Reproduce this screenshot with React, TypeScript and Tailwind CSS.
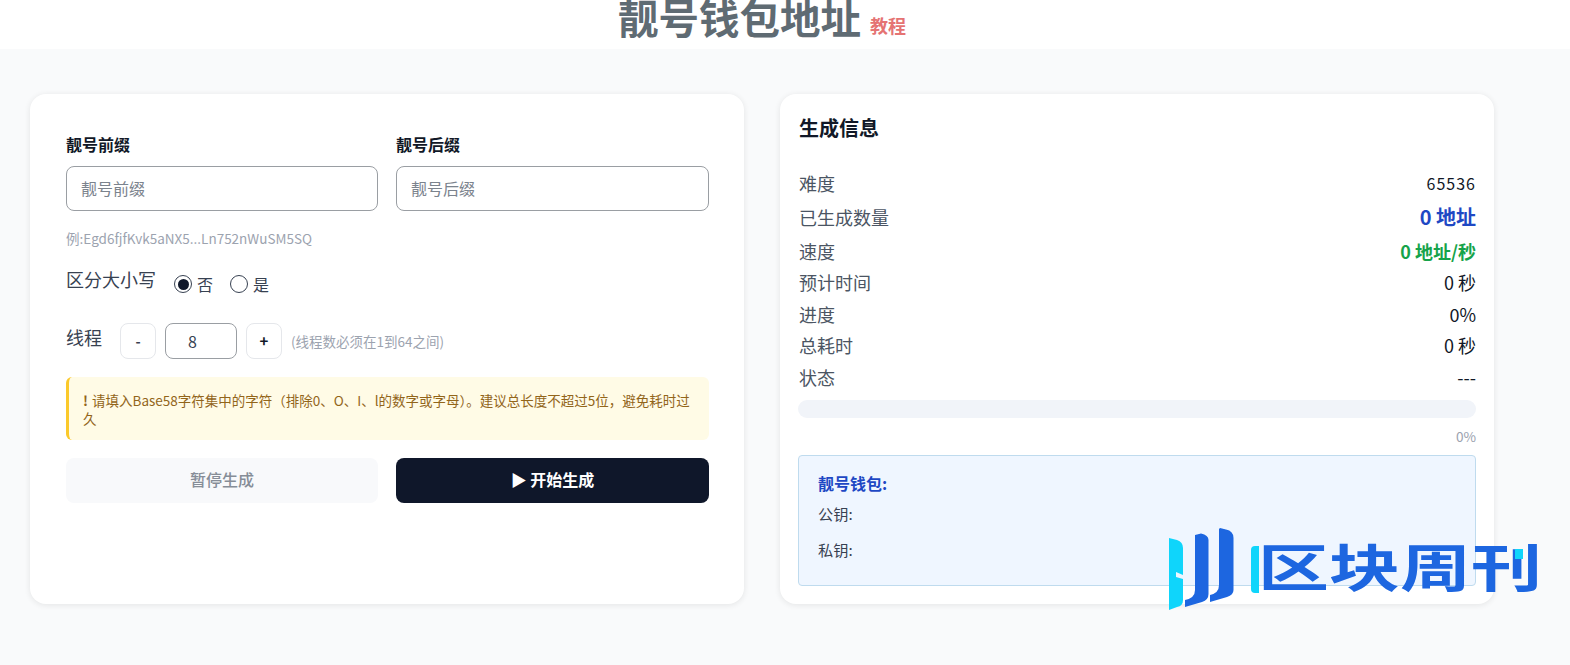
const font = '[font-family:"Noto_Sans_CJK_SC","Noto_Sans",sans-serif]';

const stats = [
  { label: '难度', value: '65536', cls: 'text-[16px] text-[#111827] tracking-[1px]', row: 'h-[32px]' },
  { label: '已生成数量', value: '0 地址', cls: 'text-[20px] font-bold text-[#1e48c4]', row: 'h-[36px]' },
  { label: '速度', value: '0 地址/秒', cls: 'text-[18px] font-bold text-[#16a34a]', row: 'h-[32px]' },
  { label: '预计时间', value: '0 秒', cls: 'text-[18px] text-[#111827]', row: 'h-[31px]' },
  { label: '进度', value: '0%', cls: 'text-[18px] text-[#111827]', row: 'h-[32px]' },
  { label: '总耗时', value: '0 秒', cls: 'text-[18px] text-[#111827]', row: 'h-[31px]' },
  { label: '状态', value: '---', cls: 'text-[18px] text-[#111827]', row: 'h-[32px]' },
];

function LogoMark() {
  return (
    <svg width="68" height="82" viewBox="0 0 68 82" className="shrink-0">
      <path d="M1 10 L9 12 Q15 14 15 20 L15 47 L8 44 L8 49 L15 51 L15 72 Q15 78 9 79 L1 82 Z" fill="#0fd5fb" />
      <path d="M27 7 L33 5.5 Q40.5 7 40.5 12 L40.5 66 Q40.5 72 34 74 L17 79 L17 72 Q27 70 27 62 Z" fill="#1d66e0" />
      <path d="M51 1 L52 0 L58 1.5 Q65.5 3 65.5 10 L65.5 62 Q65.5 67 59 69 L42 74 L42 67 Q51 65 51 57 Z" fill="#1d66e0" />
    </svg>
  );
}

export default function App() {
  return (
    <div className={`relative w-[1570px] h-[665px] overflow-hidden bg-[#f9fafb] ${font}`}>
      <header className="h-[49px] bg-white flex justify-center items-end overflow-hidden pr-[46px]">
        <div className="flex items-end gap-[9px]">
          <h1 className="text-[40.5px] leading-[60px] font-bold text-[#5f6b73] mb-[2px]">靓号钱包地址</h1>
          <a className="text-[18px] leading-[27px] font-bold text-[#e57373] mb-[10px]">教程</a>
        </div>
      </header>

      <main className="flex gap-[36px] pl-[30px] pt-[45px]">
        <section className="w-[714px] h-[510px] bg-white rounded-[16px] shadow-[0_1px_6px_rgba(0,0,0,0.09)] pl-[36px] pr-[35px] pt-[39px]">
          <div className="grid grid-cols-[312px_313px] gap-x-[18px]">
            <div>
              <label className="block text-[16px] leading-[22px] font-bold text-[#111827]">靓号前缀</label>
              <input
                placeholder="靓号前缀"
                className="mt-[11px] w-full h-[45px] px-[14px] pb-[2px] text-[16px] rounded-[8px] border border-[#9a9ea3] placeholder:text-[#7b838d] outline-none"
              />
            </div>
            <div>
              <label className="block text-[16px] leading-[22px] font-bold text-[#111827]">靓号后缀</label>
              <input
                placeholder="靓号后缀"
                className="mt-[11px] w-full h-[45px] px-[14px] pb-[2px] text-[16px] rounded-[8px] border border-[#9a9ea3] placeholder:text-[#7b838d] outline-none"
              />
            </div>
          </div>
          <p className="mt-[17px] text-[13.5px] leading-[20px] text-[#9ca3af]">例:Egd6fjfKvk5aNX5...Ln752nWuSM5SQ</p>

          <div className="mt-[18px] flex items-start h-[26px]">
            <span className="text-[18px] leading-[26px] text-[#374151]">区分大小写</span>
            <div className="ml-[18px] mt-[7px] flex items-center text-[16px] leading-[22px] text-[#374151]">
              <span className="w-[18px] h-[18px] rounded-full border border-[#374151] flex items-center justify-center">
                <span className="w-[11px] h-[11px] rounded-full bg-[#0f172a]" />
              </span>
              <span className="ml-[5px]">否</span>
              <span className="ml-[17px] w-[18px] h-[18px] rounded-full border border-[#374151]" />
              <span className="ml-[5px]">是</span>
            </div>
          </div>

          <div className="mt-[31px] flex items-start">
            <span className="text-[18px] leading-[28px] text-[#374151] w-[54px]">线程</span>
            <button className="w-[36px] h-[36px] rounded-[8px] border border-[#e5e7eb] bg-white text-[14px] font-bold text-[#374151]">-</button>
            <input
              value="8"
              readOnly
              className="ml-[9px] w-[72px] h-[36px] rounded-[8px] border border-[#9a9ea3] pl-[22px] text-[16px] text-[#374151] outline-none"
            />
            <button className="ml-[9px] w-[36px] h-[36px] rounded-[8px] border border-[#e5e7eb] bg-white text-[15px] font-bold text-[#111827]">+</button>
            <span className="ml-[9px] text-[13.5px] leading-[36px] text-[#9ca3af]">(线程数必须在1到64之间)</span>
          </div>

          <div className="mt-[18px] h-[63px] rounded-[6px] border-l-[3px] border-[#fbc92a] bg-[#fffbe6] pl-[14px] pr-[12px] pt-[14px] text-[13.5px] leading-[18px] text-[#92651a]">
            <b className="mr-[1px]">!</b> 请填入Base58字符集中的字符（排除0、O、I、l的数字或字母）。建议总长度不超过5位，避免耗时过久
          </div>

          <div className="mt-[18px] grid grid-cols-[312px_313px] gap-x-[18px]">
            <button className="h-[45px] pb-[3px] rounded-[8px] bg-[#f8f9fb] text-[16px] font-medium text-[#868d97]">暂停生成</button>
            <button className="h-[45px] pb-[3px] rounded-[8px] bg-[#0f172a] text-[16px] font-bold text-white">▶ 开始生成</button>
          </div>
        </section>

        <section className="w-[714px] h-[510px] bg-white rounded-[16px] shadow-[0_1px_6px_rgba(0,0,0,0.09)] pl-[19px] pr-[18px] pt-[19px]">
          <h2 className="text-[20px] leading-[30px] font-bold text-[#111827]">生成信息</h2>
          <div className="mt-[24px]">
            {stats.map((s) => (
              <div key={s.label} className={`flex items-center justify-between ${s.row}`}>
                <span className="text-[18px] text-[#4b5563]">{s.label}</span>
                <span className={s.cls}>{s.value}</span>
              </div>
            ))}
          </div>
          <div className="mt-[7px] h-[18px] rounded-full bg-[#f1f4f9] ml-[-1px]" />
          <div className="mt-[8px] text-right text-[13.6px] leading-[20px] text-[#9ca3af]">0%</div>
          <div className="mt-[9px] ml-[-1px] h-[131px] rounded-[4px] border border-[#bfdbee] bg-[#eff6ff] pl-[19px] pt-[15px]">
            <div className="text-[16px] leading-[24px] font-bold text-[#1e48c4]">靓号钱包:</div>
            <div className="mt-[6px] text-[15.2px] leading-[24px] text-[#374151]">公钥:</div>
            <div className="mt-[12px] text-[15.2px] leading-[24px] text-[#374151]">私钥:</div>
          </div>
        </section>
      </main>

      <div className="absolute left-[1168px] top-[528px] flex items-start">
        <LogoMark />
        <div className="relative ml-[22px] mt-[11px] text-[71px] leading-[72px] font-bold text-[#1d66e0] whitespace-nowrap scale-y-[0.72] origin-top">
          区块周刊
        </div>
        <span className="absolute left-[83px] top-[18px] w-[8px] h-[47px] bg-[#0fd5fb] rounded-l-[4px]" />
        <span className="absolute left-[347px] top-[21px] w-[8px] h-[10px] bg-[#0fd5fb]" />
      </div>
    </div>
  );
}
